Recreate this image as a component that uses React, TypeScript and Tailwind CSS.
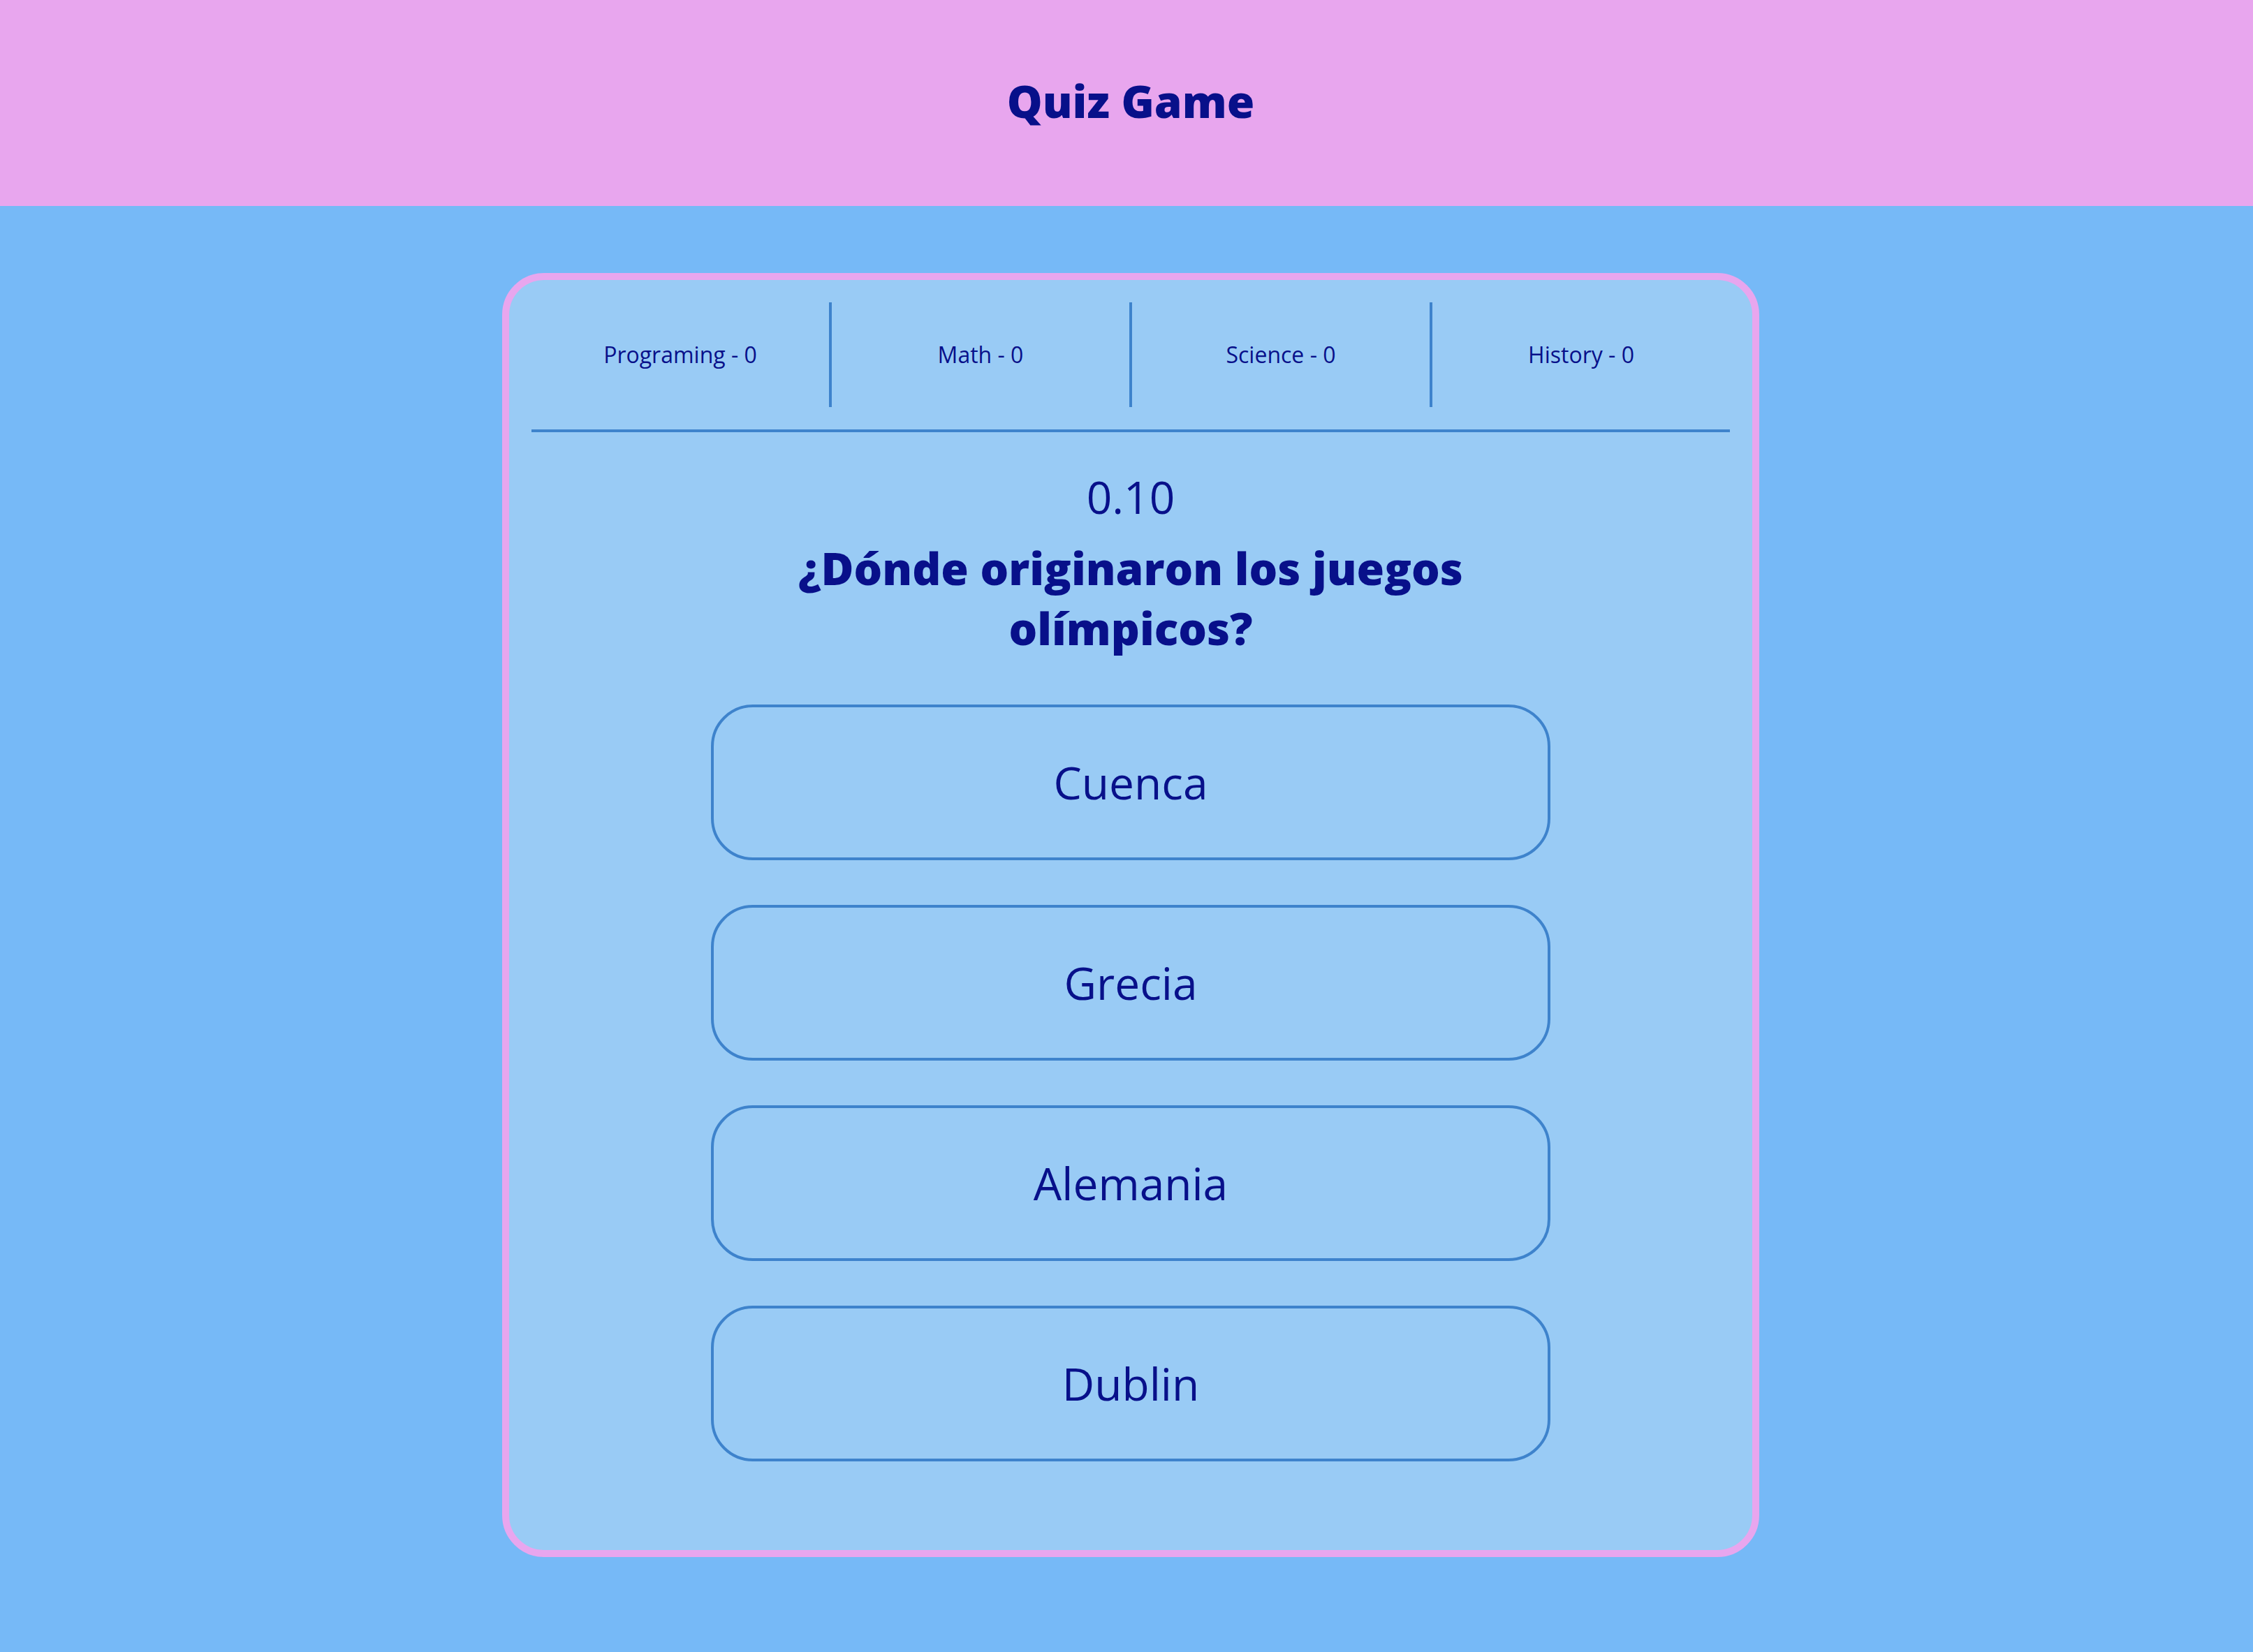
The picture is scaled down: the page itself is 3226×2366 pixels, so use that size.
const categories = ["Programing", "Math", "Science", "History"];
const answers = ["Cuenca", "Grecia", "Alemania", "Dublin"];

export default function App() {
  return (
    <div className="min-h-screen bg-[#76b9f7] font-['Open_Sans',sans-serif] text-[#08108a]">
      {/* Header */}
      <header className="h-[295px] bg-[#e8a6ee] pl-[12px] pt-[101px] text-center">
        <h1 className="text-[64px] font-extrabold leading-[87px]">Quiz Game</h1>
      </header>

      {/* Quiz card */}
      <main className="pl-[12px] pt-[96px] pb-[136px]">
        <div className="mx-auto w-[1800px] rounded-[60px] border-[10px] border-[#e8a6ee] bg-[#99cbf5] px-[32px] pt-[32px] pb-[127px]">
          <div className="flex border-b-4 border-[#3e83cc] pb-[32px]">
            {categories.map((c, i) => (
              <div
                key={c}
                className={
                  i < categories.length - 1
                    ? "flex h-[150px] flex-1 items-center justify-center border-r-4 border-[#3e83cc] text-[32px]"
                    : "flex h-[150px] flex-1 items-center justify-center text-[32px]"
                }
              >
                {c} - 0
              </div>
            ))}
          </div>

          <div className="mx-auto flex w-[1202px] flex-col items-center">
            <p className="mt-[49px] text-[64px] leading-[87px]">0.10</p>
            <h2 className="mt-[16px] text-center text-[64px] font-extrabold leading-[86px]">
              ¿Dónde originaron los juegos olímpicos?
            </h2>

            <div className="mt-[66px] flex w-full flex-col gap-[64px]">
              {answers.map((a) => (
                <button
                  key={a}
                  className="flex h-[223px] w-full items-center justify-center rounded-[60px] border-4 border-[#3e83cc] text-[64px] leading-[87px]"
                >
                  {a}
                </button>
              ))}
            </div>
          </div>
        </div>
      </main>
    </div>
  );
}
